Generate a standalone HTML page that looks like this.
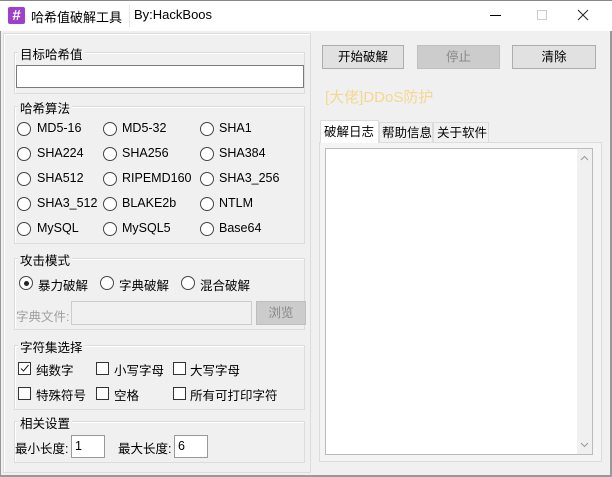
<!DOCTYPE html>
<html><head><meta charset="utf-8"><style>
*{margin:0;padding:0;box-sizing:border-box}
body{width:612px;height:477px;background:#f0f0f0;font-family:"Liberation Sans","Noto Sans CJK SC",sans-serif;font-size:12px;color:#000;position:relative;overflow:hidden}
.a{position:absolute;white-space:nowrap}
.tb{left:0;top:0;width:612px;height:31px;background:#fff;border-top:1px solid #888}
.gb{position:absolute;border:1px solid #dcdcdc;box-shadow:inset 1px 1px 0 #fff}
.lbl{position:absolute;background:#f0f0f0;padding:0 2px;font-size:12.5px}
.in{position:absolute;background:#fff;border:1px solid #7a7a7a}
.r{position:absolute;width:14px;height:14px;border:1px solid #444;border-radius:50%;background:#fff}
.c{position:absolute;width:13px;height:13px;border:1px solid #333;background:#fff}
.t{position:absolute;font-size:12.5px;white-space:nowrap}
.btn{position:absolute;border:1px solid #adadad;background:#e1e1e1;text-align:center;line-height:22px;font-size:12.5px}
</style></head><body>
<div class="a tb"></div>
<div class="a" style="left:8px;top:7px;width:17px;height:17px;background:#a040c8;border-radius:2px;color:#fff;font-weight:bold;font-size:15px;line-height:17px;text-align:center">#</div>
<div class="a" style="left:31px;top:7px;font-size:13px">哈希值破解工具</div>
<div class="a" style="left:129px;top:5px;width:1px;height:22px;background:#e5e5e5"></div>
<div class="a" style="left:134px;top:7px;font-size:13px">By:HackBoos</div>
<div class="a" style="left:490px;top:15px;width:11px;height:1px;background:#000"></div>
<div class="a" style="left:537px;top:10px;width:10px;height:10px;border:1px solid #ccc"></div>
<svg class="a" style="left:577px;top:9px" width="12" height="12"><path d="M1 1L11 11M11 1L1 11" stroke="#222" stroke-width="1"/></svg>
<div class="a" style="left:0;top:31px;width:1px;height:446px;background:#999"></div>
<div class="a" style="left:610px;top:31px;width:2px;height:446px;background:#999"></div>
<div class="a" style="left:0;top:475px;width:612px;height:2px;background:#999"></div>
<div class="gb" style="left:3px;top:33px;width:308px;height:440px"></div>

<div class="gb" style="left:14px;top:52px;width:291px;height:42px"></div>
<div class="lbl" style="left:18px;top:44px">目标哈希值</div>
<div class="in" style="left:16px;top:65px;width:288px;height:23px"></div>

<div class="gb" style="left:14px;top:106px;width:291px;height:138px"></div>
<div class="lbl" style="left:18px;top:98px">哈希算法</div>
<div class="r" style="left:17px;top:122px"></div><div class="t" style="left:37px;top:121px">MD5-16</div>
<div class="r" style="left:103px;top:122px"></div><div class="t" style="left:122px;top:121px">MD5-32</div>
<div class="r" style="left:200px;top:122px"></div><div class="t" style="left:219px;top:121px">SHA1</div>
<div class="r" style="left:17px;top:147px"></div><div class="t" style="left:37px;top:146px">SHA224</div>
<div class="r" style="left:103px;top:147px"></div><div class="t" style="left:122px;top:146px">SHA256</div>
<div class="r" style="left:200px;top:147px"></div><div class="t" style="left:219px;top:146px">SHA384</div>
<div class="r" style="left:17px;top:172px"></div><div class="t" style="left:37px;top:171px">SHA512</div>
<div class="r" style="left:103px;top:172px"></div><div class="t" style="left:122px;top:171px">RIPEMD160</div>
<div class="r" style="left:200px;top:172px"></div><div class="t" style="left:219px;top:171px">SHA3_256</div>
<div class="r" style="left:17px;top:197px"></div><div class="t" style="left:37px;top:196px">SHA3_512</div>
<div class="r" style="left:103px;top:197px"></div><div class="t" style="left:122px;top:196px">BLAKE2b</div>
<div class="r" style="left:200px;top:197px"></div><div class="t" style="left:219px;top:196px">NTLM</div>
<div class="r" style="left:17px;top:222px"></div><div class="t" style="left:37px;top:221px">MySQL</div>
<div class="r" style="left:103px;top:222px"></div><div class="t" style="left:122px;top:221px">MySQL5</div>
<div class="r" style="left:200px;top:222px"></div><div class="t" style="left:219px;top:221px">Base64</div>

<div class="gb" style="left:14px;top:258px;width:291px;height:72px"></div>
<div class="lbl" style="left:18px;top:250px">攻击模式</div>
<div class="r" style="left:19px;top:276px"></div><div class="a" style="left:23.5px;top:280.5px;width:5px;height:5px;background:#222;border-radius:50%"></div>
<div class="t" style="left:38px;top:275px">暴力破解</div>
<div class="r" style="left:100px;top:276px"></div><div class="t" style="left:119px;top:275px">字典破解</div>
<div class="r" style="left:181px;top:276px"></div><div class="t" style="left:200px;top:275px">混合破解</div>
<div class="t" style="left:16px;top:306px;color:#a0a0a0">字典文件:</div>
<div class="a" style="left:71px;top:301px;width:181px;height:24px;border:1px solid #ccc;background:#f0f0f0"></div>
<div class="btn" style="left:256px;top:301px;width:50px;height:24px;background:#ccc;border-color:#bfbfbf;color:#888">浏览</div>

<div class="gb" style="left:14px;top:345px;width:291px;height:65px"></div>
<div class="lbl" style="left:18px;top:337px">字符集选择</div>
<div class="c" style="left:18px;top:362px"></div><svg class="a" style="left:18px;top:362px" width="13" height="13"><path d="M3 6.5L5.5 9L10.5 3" stroke="#222" fill="none" stroke-width="1"/></svg><div class="t" style="left:36px;top:360px">纯数字</div>
<div class="c" style="left:96px;top:362px"></div><div class="t" style="left:114px;top:360px">小写字母</div>
<div class="c" style="left:173px;top:362px"></div><div class="t" style="left:190px;top:360px">大写字母</div>
<div class="c" style="left:18px;top:387px"></div><div class="t" style="left:36px;top:385px">特殊符号</div>
<div class="c" style="left:96px;top:387px"></div><div class="t" style="left:114px;top:385px">空格</div>
<div class="c" style="left:173px;top:387px"></div><div class="t" style="left:190px;top:385px">所有可打印字符</div>

<div class="gb" style="left:14px;top:421px;width:291px;height:42px"></div>
<div class="lbl" style="left:18px;top:413px">相关设置</div>
<div class="t" style="left:15px;top:438px">最小长度:</div>
<div class="in" style="left:71px;top:435px;width:34px;height:23px;border-color:#999;padding:3px 3px;font-size:12.5px">1</div>
<div class="t" style="left:118px;top:438px">最大长度:</div>
<div class="in" style="left:174px;top:435px;width:34px;height:23px;border-color:#999;padding:3px 3px;font-size:12.5px">6</div>

<div class="btn" style="left:322px;top:45px;width:82px;height:24px">开始破解</div>
<div class="btn" style="left:417px;top:45px;width:83px;height:24px;background:#ccc;border-color:#bfbfbf;color:#888">停止</div>
<div class="btn" style="left:512px;top:45px;width:84px;height:24px">清除</div>
<div class="a" style="left:325px;top:86px;font-size:15px;color:#f4d890">[大佬]DDoS防护</div>

<div class="a" style="left:319px;top:142px;width:283px;height:320px;border:1px solid #dcdcdc;background:#f4f4f4"></div>
<div class="a" style="left:320px;top:120px;width:59px;height:23px;background:#fff;border:1px solid #dcdcdc;border-bottom:none;font-size:12.5px;line-height:22px;padding-left:3px">破解日志</div>
<div class="a" style="left:379px;top:122px;width:54px;height:20px;background:#f0f0f0;border:1px solid #dcdcdc;border-bottom:none;font-size:12.5px;line-height:20px;padding-left:2px">帮助信息</div>
<div class="a" style="left:433px;top:122px;width:56px;height:20px;background:#f0f0f0;border:1px solid #dcdcdc;border-bottom:none;font-size:12.5px;line-height:20px;padding-left:3px">关于软件</div>
<div class="a" style="left:325px;top:148px;width:268px;height:307px;background:#fff;border:1px solid #bbb"></div>
<div class="a" style="left:577px;top:149px;width:15px;height:305px;background:#f0f0f0"></div>
<svg class="a" style="left:580px;top:155px" width="9" height="6"><path d="M1 5L4.5 1.5L8 5" stroke="#999" fill="none"/></svg>
<svg class="a" style="left:580px;top:442px" width="9" height="6"><path d="M1 1L4.5 4.5L8 1" stroke="#999" fill="none"/></svg>
</body></html>
